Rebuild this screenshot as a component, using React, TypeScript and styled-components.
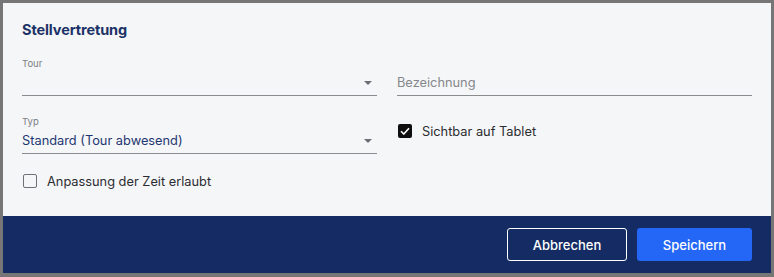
import React from "react";
import styled, { createGlobalStyle } from "styled-components";

const GlobalStyle = createGlobalStyle`
  html, body {
    margin: 0;
    padding: 0;
    background: #767676;
    font-family: Inter, "Noto Sans", sans-serif;
  }
`;

const Frame = styled.div`
  width: 774px;
  height: 277px;
  box-sizing: border-box;
  padding: 3px 3px 4px 3px;
`;

const Dialog = styled.div`
  height: 100%;
  display: flex;
  flex-direction: column;
  background: #f5f6f8;
`;

const Body = styled.div`
  flex: 1;
  padding: 17px 19px 0 19px;
`;

const Title = styled.h2`
  margin: 0 0 18px 0;
  font-size: 14.5px;
  font-weight: 700;
  color: #1b3266;
  line-height: 20px;
  letter-spacing: -0.1px;
`;

const Grid = styled.div`
  display: grid;
  grid-template-columns: 355px 355px;
  column-gap: 20px;
  align-items: start;
`;

const Field = styled.div<{ $top?: number }>`
  display: flex;
  flex-direction: column;
  margin-top: ${(p) => p.$top ?? 0}px;
`;

const Label = styled.span`
  font-size: 9.5px;
  color: #7a7d84;
  line-height: 12px;
  height: 12px;
`;

const Control = styled.div`
  height: 26px;
  box-sizing: border-box;
  display: flex;
  align-items: center;
  justify-content: space-between;
  border-bottom: 1px solid #8a8c90;
`;

const Value = styled.span<{ $placeholder?: boolean }>`
  font-size: 12.8px;
  color: ${(p) => (p.$placeholder ? "#85878c" : "#1f3672")};
`;

const Arrow = styled.span`
  width: 0;
  height: 0;
  margin-right: 5px;
  border-left: 4px solid transparent;
  border-right: 4px solid transparent;
  border-top: 4px solid #6b6e74;
`;

const CheckRow = styled.label<{ $top?: number }>`
  display: flex;
  align-items: center;
  gap: 10px;
  margin-top: ${(p) => p.$top ?? 0}px;
  font-size: 12.8px;
  color: #2b2d31;
  height: 16px;
`;

const Box = styled.span<{ $checked?: boolean }>`
  width: 14px;
  height: 14px;
  box-sizing: border-box;
  border-radius: 2px;
  display: flex;
  align-items: center;
  justify-content: center;
  margin-left: 1px;
  border: ${(p) => (p.$checked ? "none" : "1.5px solid #6f7176")};
  background: ${(p) => (p.$checked ? "#0f0f10" : "transparent")};
`;

const Footer = styled.div`
  height: 57px;
  background: #142c63;
  display: flex;
  align-items: center;
  justify-content: flex-end;
  gap: 10px;
  padding: 0 19px 0 0;
`;

const Button = styled.button<{ $primary?: boolean }>`
  height: 33px;
  box-sizing: border-box;
  border-radius: 3px;
  font-family: Inter, "Noto Sans", sans-serif;
  font-size: 13px;
  font-weight: 500;
  color: #ffffff;
  cursor: pointer;
  width: ${(p) => (p.$primary ? "115px" : "120px")};
  border: ${(p) => (p.$primary ? "none" : "1px solid #ffffff")};
  background: ${(p) => (p.$primary ? "#2466f5" : "transparent")};
`;

const Check = () => (
  <svg width="10" height="8" viewBox="0 0 10 8">
    <path d="M1 4.2 L3.8 7 L9 1.2" fill="none" stroke="#fff" strokeWidth="1.6" />
  </svg>
);

export default function App() {
  return (
    <>
      <GlobalStyle />
      <Frame>
        <Dialog>
          <Body>
            <Title>Stellvertretung</Title>
            <Grid>
              <Field>
                <Label>Tour</Label>
                <Control>
                  <Value />
                  <Arrow />
                </Control>
              </Field>
              <Field $top={12}>
                <Control>
                  <Value $placeholder>Bezeichnung</Value>
                </Control>
              </Field>
              <Field $top={20}>
                <Label>Typ</Label>
                <Control>
                  <Value>Standard (Tour abwesend)</Value>
                  <Arrow />
                </Control>
              </Field>
              <CheckRow $top={27}>
                <Box $checked>
                  <Check />
                </Box>
                Sichtbar auf Tablet
              </CheckRow>
              <CheckRow $top={19}>
                <Box />
                Anpassung der Zeit erlaubt
              </CheckRow>
            </Grid>
          </Body>
          <Footer>
            <Button>Abbrechen</Button>
            <Button $primary>Speichern</Button>
          </Footer>
        </Dialog>
      </Frame>
    </>
  );
}
